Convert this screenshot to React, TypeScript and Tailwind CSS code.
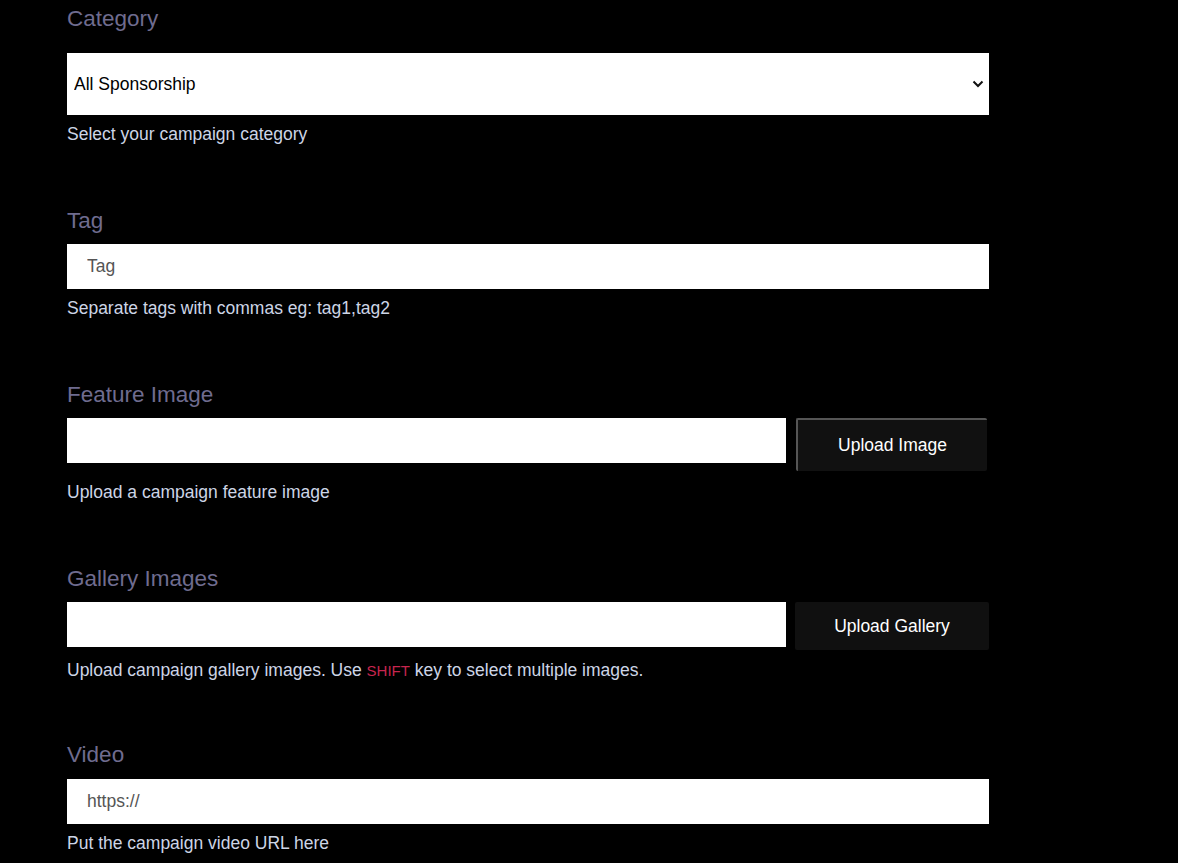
import React from "react";

const font = { fontFamily: '"Liberation Sans", Arial, sans-serif' };

function Label({ children, className = "" }: { children: React.ReactNode; className?: string }) {
  return <div className={`text-[22.5px] leading-[28px] text-[#6f6c8f] ${className}`}>{children}</div>;
}

function Help({ children, className = "mt-[7px]" }: { children: React.ReactNode; className?: string }) {
  return <div className={`${className} text-[17.5px] leading-[24px] text-[#cdd5e6]`}>{children}</div>;
}

export default function App() {
  return (
    <div className="min-h-[863px] w-full bg-black" style={font}>
      <div className="ml-[67px] w-[922px] pt-[5px]">
        {/* Category */}
        <Label>Category</Label>
        <div className="relative mt-[20px] h-[62px] w-full bg-white">
          <select
            className="h-full w-full appearance-none bg-white pl-[7px] text-[17.5px] text-black outline-none"
            defaultValue="all"
            style={font}
          >
            <option value="all">All Sponsorship</option>
          </select>
          <svg
            className="pointer-events-none absolute right-[5px] top-[26px]"
            width="12"
            height="10"
            viewBox="0 0 12 10"
          >
            <path d="M1.5 2.5 L6 7 L10.5 2.5" fill="none" stroke="#111" strokeWidth="2" />
          </svg>
        </div>
        <Help>Select your campaign category</Help>

        {/* Tag */}
        <Label className="mt-[61px]">Tag</Label>
        <input
          className="mt-[9px] block h-[45px] w-full bg-white pl-[20px] text-[17.5px] text-black outline-none placeholder:text-[#555]"
          placeholder="Tag"
          style={font}
        />
        <Help>Separate tags with commas eg: tag1,tag2</Help>

        {/* Feature Image */}
        <Label className="mt-[61px]">Feature Image</Label>
        <div className="mt-[9px] flex items-start">
          <input
            className="block h-[45px] w-[719px] bg-white pl-[20px] text-[17.5px] text-black outline-none"
            style={font}
          />
          <button
            className="ml-[10px] h-[53px] w-[191px] rounded-[2px] border-l-2 border-t-2 border-[#555] bg-[#111] text-[17.5px] text-white"
            style={font}
          >
            Upload Image
          </button>
        </div>
        <Help className="mt-[9px]">Upload a campaign feature image</Help>

        {/* Gallery Images */}
        <Label className="mt-[61px]">Gallery Images</Label>
        <div className="mt-[9px] flex items-start">
          <input
            className="block h-[45px] w-[719px] bg-white pl-[20px] text-[17.5px] text-black outline-none"
            style={font}
          />
          <button
            className="ml-[9px] h-[48px] w-[194px] rounded-[2px] bg-[#101010] text-[17.5px] text-white"
            style={font}
          >
            Upload Gallery
          </button>
        </div>
        <Help className="mt-[8px]">
          Upload campaign gallery images. Use{" "}
          <span className="text-[15px] text-[#c7254e]">SHIFT</span> key to select multiple images.
        </Help>

        {/* Video */}
        <Label className="mt-[58px]">Video</Label>
        <input
          className="mt-[10px] block h-[45px] w-full bg-white pl-[20px] text-[17.5px] text-black outline-none placeholder:text-[#555]"
          placeholder="https://"
          style={font}
        />
        <Help>Put the campaign video URL here</Help>
      </div>
    </div>
  );
}
